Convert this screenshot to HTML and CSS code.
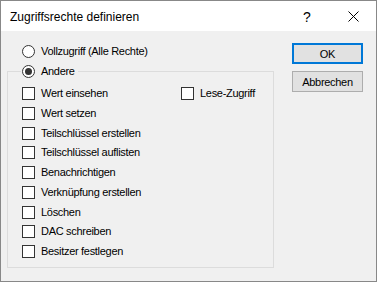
FILE: index.html
```html
<!DOCTYPE html>
<html lang="de">
<head>
<meta charset="utf-8">
<title>Zugriffsrechte definieren</title>
<link rel="stylesheet" href="styles.css">
</head>
<body>
<div class="window">
  <div class="titlebar">
    <span class="title">Zugriffsrechte definieren</span>
    <span class="capbtn help">?</span>
    <span class="capbtn close"><svg width="11" height="11" viewBox="0 0 11 11"><path d="M0.5 0.5 L10.5 10.5 M10.5 0.5 L0.5 10.5" stroke="#000" stroke-width="1" fill="none"/></svg></span>
  </div>
  <div class="body">
    <div class="left">
      <label class="opt"><span class="radio"></span><span>Vollzugriff (Alle Rechte)</span></label>
      <fieldset class="group">
        <legend class="opt legend"><span class="radio checked"></span><span>Andere</span></legend>
        <div class="grid">
          <label class="opt"><span class="box"></span><span>Wert einsehen</span></label>
          <label class="opt"><span class="box"></span><span>Lese-Zugriff</span></label>
          <label class="opt c1"><span class="box"></span><span>Wert setzen</span></label>
          <label class="opt c1"><span class="box"></span><span>Teilschlüssel erstellen</span></label>
          <label class="opt c1"><span class="box"></span><span>Teilschlüssel auflisten</span></label>
          <label class="opt c1"><span class="box"></span><span>Benachrichtigen</span></label>
          <label class="opt c1"><span class="box"></span><span>Verknüpfung erstellen</span></label>
          <label class="opt c1"><span class="box"></span><span>Löschen</span></label>
          <label class="opt c1"><span class="box"></span><span>DAC schreiben</span></label>
          <label class="opt c1"><span class="box"></span><span>Besitzer festlegen</span></label>
        </div>
      </fieldset>
    </div>
    <div class="buttons">
      <button class="btn default">OK</button>
      <button class="btn">Abbrechen</button>
    </div>
  </div>
</div>
</body>
</html>
```

FILE: styles.css
```css
html, body {
  margin: 0;
  padding: 0;
}
body {
  width: 377px;
  height: 282px;
  overflow: hidden;
  font-family: "Liberation Sans", Arial, sans-serif;
  font-size: 11px;
  color: #000;
}
.window {
  box-sizing: border-box;
  width: 377px;
  height: 282px;
  border: 1px solid #888888;
  display: flex;
  flex-direction: column;
  background: #f0f0f0;
}
.titlebar {
  height: 30px;
  flex: none;
  background: #ffffff;
  display: flex;
  align-items: center;
  padding-left: 9px;
}
.title {
  flex: 1;
  font-size: 12px;
  padding-top: 1px;
}
.capbtn {
  width: 46px;
  height: 30px;
  display: flex;
  align-items: center;
  justify-content: center;
}
.help {
  font-size: 14px;
  padding-top: 1px;
  box-sizing: border-box;
}
.close svg {
  display: block;
}
.body {
  flex: 1;
  display: flex;
}
.left {
  padding: 14px 0 0 6px;
  width: 267px;
}
.opt {
  display: flex;
  align-items: center;
  height: 13px;
  line-height: 13px;
  letter-spacing: -0.3px;
  white-space: nowrap;
}
.left > .opt {
  margin-left: 15px;
}
.radio {
  box-sizing: border-box;
  width: 13px;
  height: 13px;
  border: 1px solid #333333;
  border-radius: 50%;
  background: #ffffff;
  margin-right: 6px;
  flex: none;
  display: flex;
  align-items: center;
  justify-content: center;
}
.radio.checked::after {
  content: "";
  width: 7px;
  height: 7px;
  border-radius: 50%;
  background: #333333;
}
.box {
  box-sizing: border-box;
  width: 13px;
  height: 13px;
  border: 1px solid #333333;
  background: #ffffff;
  margin-right: 6px;
  flex: none;
}
.group {
  margin: 7px 0 0 0;
  padding: 9px 0 9px 14px;
  border: 1px solid #dcdcdc;
  box-sizing: border-box;
  width: 267px;
  min-width: 0;
}
.legend {
  margin-left: -1px;
  padding: 0 3px 0 1px;
}
.grid {
  display: grid;
  grid-template-columns: 159px auto;
  grid-auto-rows: 13px;
  row-gap: 6.75px;
}
.c1 {
  grid-column: 1;
}
.buttons {
  margin-left: 18px;
  padding-top: 12px;
  display: flex;
  flex-direction: column;
  gap: 7px;
}
.btn {
  box-sizing: border-box;
  width: 71px;
  height: 21px;
  margin: 0;
  padding: 0;
  background: #e1e1e1;
  border: 1px solid #adadad;
  font-family: "Liberation Sans", Arial, sans-serif;
  font-size: 11px;
  letter-spacing: -0.3px;
  color: #000;
}
.btn.default {
  border: 2px solid #0078d7;
}
```
